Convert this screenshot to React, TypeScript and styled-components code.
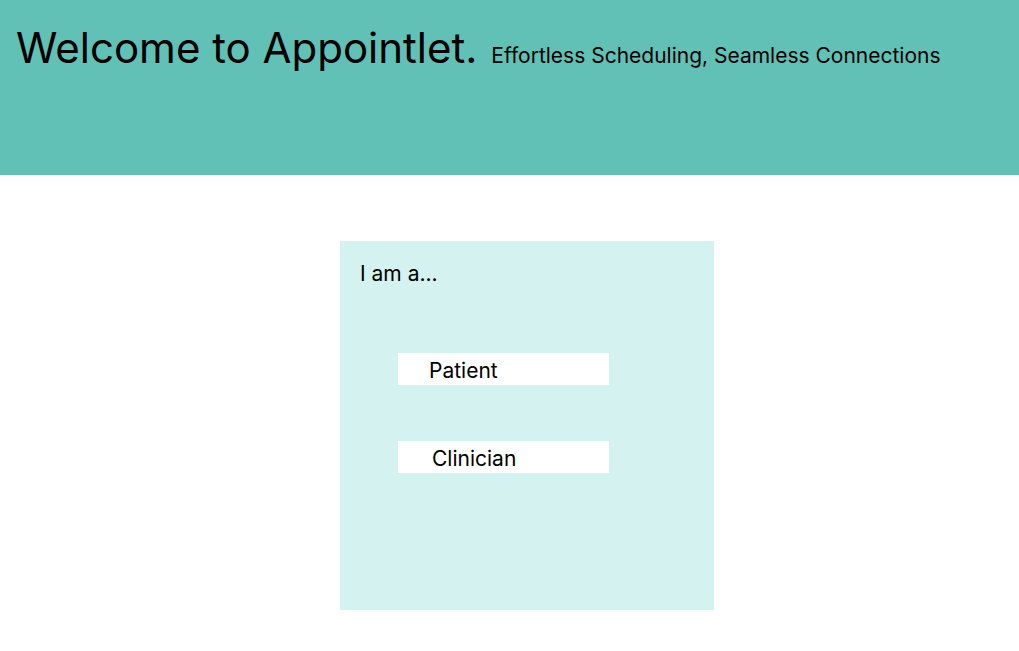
import React from "react";
import styled, { createGlobalStyle } from "styled-components";

const GlobalStyle = createGlobalStyle`
  * { box-sizing: border-box; }
  body {
    margin: 0;
    background: #ffffff;
    color: #000000;
    font-family: Inter, "Liberation Sans", sans-serif;
  }
`;

const Header = styled.header`
  display: flex;
  align-items: baseline;
  gap: 14px;
  min-height: 175px;
  padding: 22px 16px;
  background: #62c1b6;
`;

const Title = styled.h1`
  margin: 0;
  font-size: 42px;
  line-height: 52px;
  font-weight: 400;
`;

const Tagline = styled.p`
  margin: 0;
  font-size: 21px;
  line-height: 26px;
`;

const Main = styled.main`
  display: flex;
  justify-content: center;
  padding: 66px 0 40px 35px;
`;

const Card = styled.section`
  width: 374px;
  min-height: 369px;
  padding: 20px;
  background: #d4f2ef;
`;

const Prompt = styled.h2`
  margin: 0;
  font-size: 21px;
  line-height: 26px;
  font-weight: 400;
`;

const Choices = styled.div`
  display: flex;
  flex-direction: column;
  gap: 56px;
  width: 211px;
  margin: 66px 0 0 38px;
`;

const Choice = styled.button<{ $inset: number }>`
  height: 32px;
  padding: 4px 0 0 ${(p) => p.$inset}px;
  border: 0;
  background: #ffffff;
  color: inherit;
  font: inherit;
  font-size: 21px;
  line-height: 26px;
  text-align: left;
  cursor: pointer;
`;

export default function App() {
  return (
    <>
      <GlobalStyle />
      <Header>
        <Title>Welcome to Appointlet.</Title>
        <Tagline>Effortless Scheduling, Seamless Connections</Tagline>
      </Header>
      <Main>
        <Card>
          <Prompt>I am a...</Prompt>
          <Choices>
            <Choice type="button" $inset={31}>Patient</Choice>
            <Choice type="button" $inset={34}>Clinician</Choice>
          </Choices>
        </Card>
      </Main>
    </>
  );
}
